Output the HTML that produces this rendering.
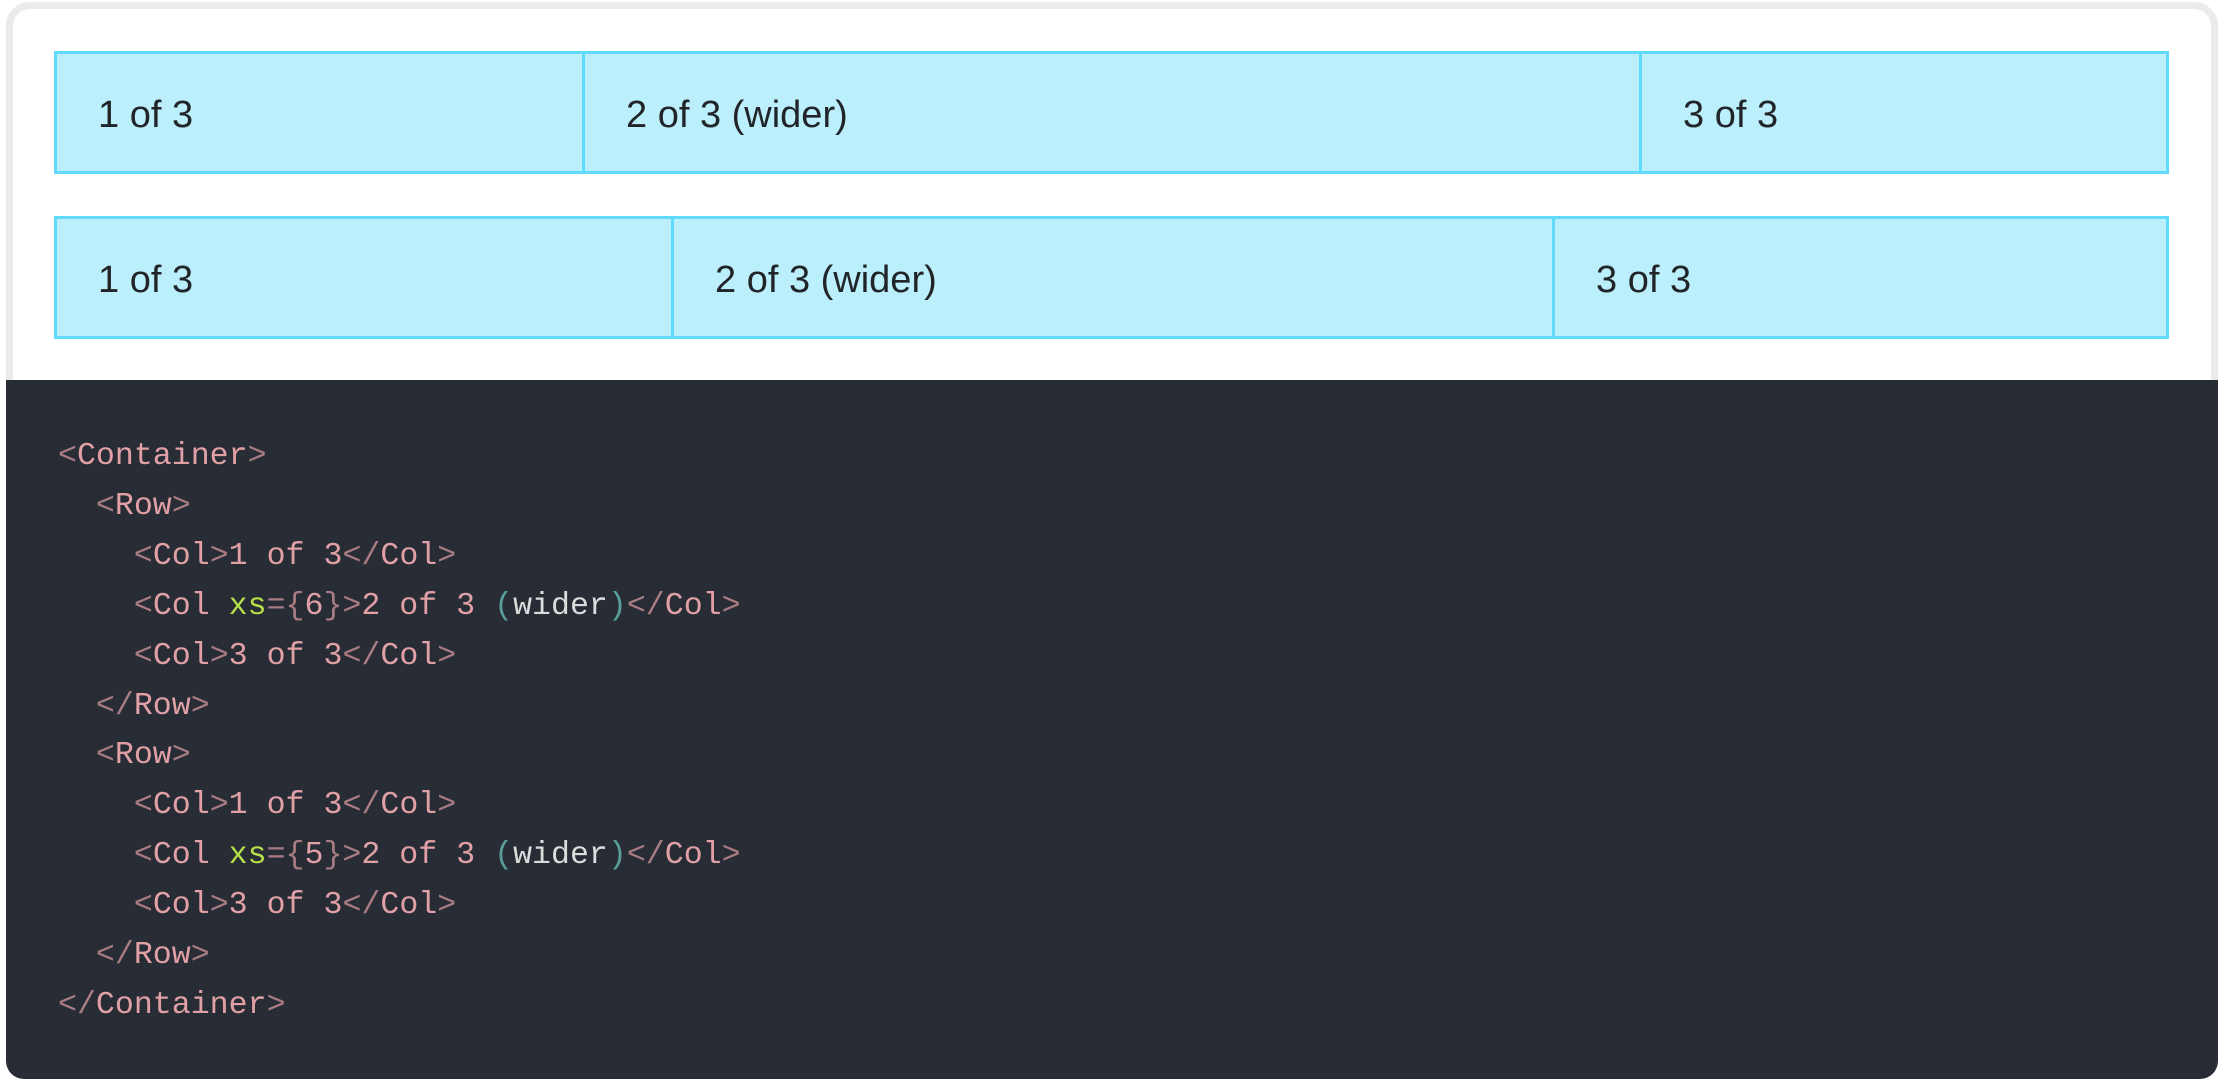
<!DOCTYPE html>
<html><head><meta charset="utf-8"><style>
html,body{margin:0;padding:0;width:2238px;height:1092px;background:#fff;overflow:hidden}
.card{position:absolute;left:6px;top:2px;width:2212px;height:1077px;box-sizing:border-box;border:7px solid #ebebeb;border-radius:24px;background:#fff}
.row{position:absolute;left:54px;width:2115px;height:123px;display:flex}
.col{box-sizing:border-box;height:123px;background:#bbeffb;border:3px solid #61dafb;margin-right:-3px;display:flex;align-items:center;padding-left:41px;padding-top:6px;font:38px "Liberation Sans","DejaVu Sans",sans-serif;color:#212529}
.col:last-child{margin-right:0}
.dark{position:absolute;left:6px;top:380px;width:2212px;height:699px;background:#282c35;border-radius:0 0 18px 18px}
pre{position:absolute;left:58px;top:432px;margin:0;font:31.6px/49.9px "Liberation Mono","DejaVu Sans Mono",monospace;color:#e0a0a6}
.p{color:#a87c82}.a{color:#b5e04a}.b{color:#5a9e9a}.w{color:#dcdcdc}
</style></head><body>
<div class="card"></div>
<div class="row" style="top:51px">
<div class="col" style="width:531px">1 of 3</div>
<div class="col" style="width:1060px">2 of 3 (wider)</div>
<div class="col" style="width:530px">3 of 3</div>
</div>
<div class="row" style="top:216px">
<div class="col" style="width:620px">1 of 3</div>
<div class="col" style="width:884px">2 of 3 (wider)</div>
<div class="col" style="width:617px">3 of 3</div>
</div>
<div class="dark"></div>
<pre><span class="p">&lt;</span>Container<span class="p">&gt;</span>
  <span class="p">&lt;</span>Row<span class="p">&gt;</span>
    <span class="p">&lt;</span>Col<span class="p">&gt;</span>1 of 3<span class="p">&lt;/</span>Col<span class="p">&gt;</span>
    <span class="p">&lt;</span>Col <span class="a">xs</span><span class="p">={</span>6<span class="p">}&gt;</span>2 of 3 <span class="b">(</span><span class="w">wider</span><span class="b">)</span><span class="p">&lt;/</span>Col<span class="p">&gt;</span>
    <span class="p">&lt;</span>Col<span class="p">&gt;</span>3 of 3<span class="p">&lt;/</span>Col<span class="p">&gt;</span>
  <span class="p">&lt;/</span>Row<span class="p">&gt;</span>
  <span class="p">&lt;</span>Row<span class="p">&gt;</span>
    <span class="p">&lt;</span>Col<span class="p">&gt;</span>1 of 3<span class="p">&lt;/</span>Col<span class="p">&gt;</span>
    <span class="p">&lt;</span>Col <span class="a">xs</span><span class="p">={</span>5<span class="p">}&gt;</span>2 of 3 <span class="b">(</span><span class="w">wider</span><span class="b">)</span><span class="p">&lt;/</span>Col<span class="p">&gt;</span>
    <span class="p">&lt;</span>Col<span class="p">&gt;</span>3 of 3<span class="p">&lt;/</span>Col<span class="p">&gt;</span>
  <span class="p">&lt;/</span>Row<span class="p">&gt;</span>
<span class="p">&lt;/</span>Container<span class="p">&gt;</span></pre>
</body></html>
